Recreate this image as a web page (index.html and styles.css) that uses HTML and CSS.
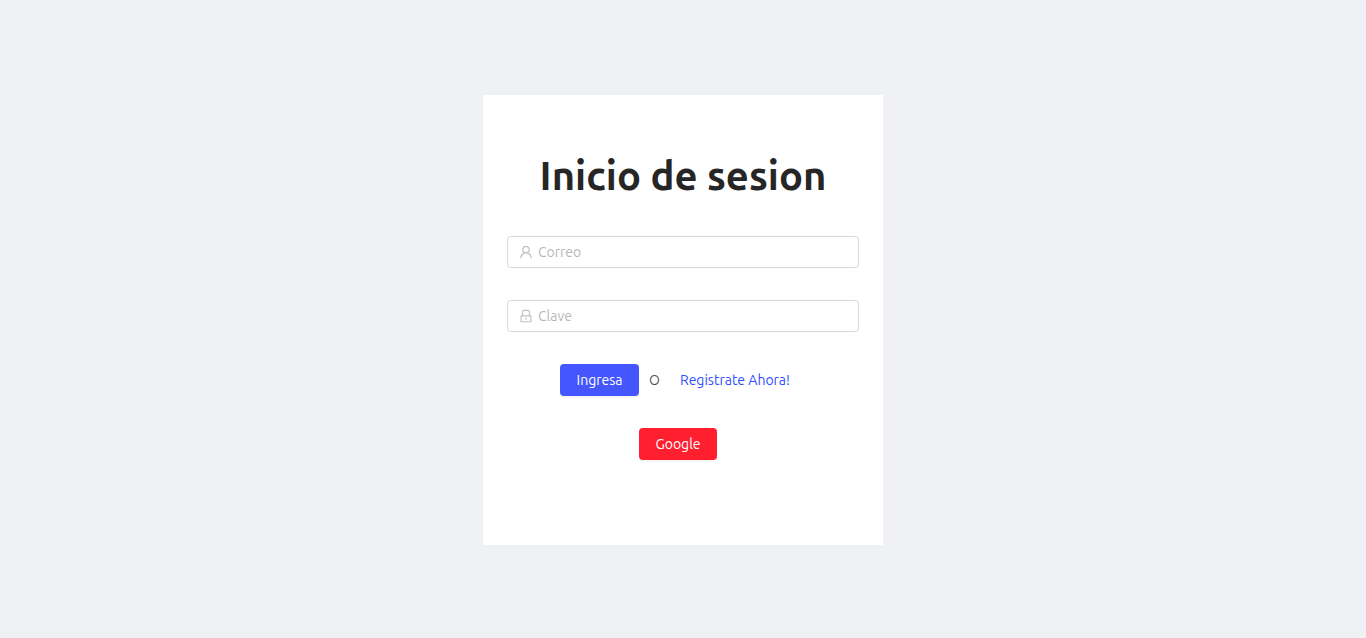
FILE: index.html
```html
<!DOCTYPE html>
<html lang="es">
<head>
<meta charset="utf-8">
<meta name="viewport" content="width=device-width, initial-scale=1">
<title>Inicio de sesion</title>
<link rel="stylesheet" href="styles.css">
</head>
<body>
<main class="card">
  <h1 class="title">Inicio de sesion</h1>
  <form class="form">
    <label class="field">
      <svg class="icon" viewBox="64 64 896 896" aria-hidden="true"><path d="M858.5 763.6a374 374 0 00-80.6-119.500 375.630 375.630 0 00-119.500-80.600c-.4-.2-.8-.3-1.200-.5C719.500 518 760 444.700 760 362c0-137-111-248-248-248S264 225 264 362c0 82.700 40.500 156 102.800 201.100-.4.2-.8.3-1.200.5-44.800 18.900-85 46-119.500 80.600a375.630 375.630 0 00-80.600 119.500A371.700 371.700 0 00136 901.800a8 8 0 008 8.200h60c4.400 0 7.900-3.500 8-7.800 2-77.200 33-149.500 87.800-204.300 56.700-56.700 132-87.900 212.200-87.900s155.500 31.200 212.200 87.900C779 752.700 810 825 812 902.200c.1 4.400 3.600 7.800 8 7.800h60a8 8 0 008-8.200c-1-47.800-10.900-94.300-29.500-138.200zM512 534c-45.900 0-89.100-17.900-121.600-50.400S340 407.900 340 362c0-45.900 17.900-89.100 50.400-121.600S466.100 190 512 190s89.100 17.900 121.600 50.400S684 316.100 684 362c0 45.900-17.900 89.100-50.400 121.600S557.900 534 512 534z"/></svg>
      <input class="input" type="email" placeholder="Correo" aria-label="Correo">
    </label>
    <label class="field">
      <svg class="icon" viewBox="64 64 896 896" aria-hidden="true"><path d="M832 464h-68V240c0-70.700-57.300-128-128-128H388c-70.700 0-128 57.300-128 128v224h-68c-17.700 0-32 14.300-32 32v384c0 17.700 14.300 32 32 32h640c17.700 0 32-14.300 32-32V496c0-17.700-14.300-32-32-32zM332 240c0-30.900 25.100-56 56-56h248c30.900 0 56 25.100 56 56v224H332V240zm460 600H232V536h560v304zM484 701v53c0 4.400 3.600 8 8 8h40c4.400 0 8-3.600 8-8v-53a48.010 48.010 0 10-56 0z"/></svg>
      <input class="input" type="password" placeholder="Clave" aria-label="Clave">
    </label>
    <div class="actions">
      <button class="button primary" type="submit">Ingresa</button>
      <span>O</span>
      <a class="link" href="#registro">Registrate Ahora!</a>
    </div>
    <div class="actions">
      <button class="button google" type="button">Google</button>
    </div>
  </form>
</main>
</body>
</html>
```
FILE: styles.css
```css
* {
  box-sizing: border-box;
}

body {
  margin: 0;
  padding: 95px 0 93px;
  min-height: 100vh;
  display: flex;
  align-items: center;
  justify-content: center;
  background: #eff1f5;
  color: rgba(0, 0, 0, 0.7);
  font-family: Ubuntu, "Noto Sans", sans-serif;
  font-size: 14px;
  line-height: 22px;
}

.card {
  width: 100%;
  max-width: 400px;
  min-height: 450px;
  padding: 56px 24px 24px;
  background: #fff;
}

.title {
  margin: 0 0 36px;
  color: #262626;
  font-size: 40px;
  font-weight: 600;
  line-height: 49px;
  text-align: center;
  white-space: nowrap;
}

.form {
  display: flex;
  flex-direction: column;
  gap: 32px;
}

.field {
  display: flex;
  align-items: center;
  gap: 5px;
  height: 32px;
  padding: 0 11px;
  border: 1px solid #d9d9d9;
  border-radius: 4px;
}

.field:focus-within {
  border-color: #4556ff;
}

.icon {
  flex: none;
  width: 14px;
  height: 14px;
  fill: #bfbfbf;
}

.input {
  flex: 1;
  min-width: 0;
  padding: 0;
  border: 0;
  outline: 0;
  background: transparent;
  color: rgba(0, 0, 0, 0.65);
  font: inherit;
}

.input::placeholder {
  color: #b8b8b8;
  opacity: 1;
}

.actions {
  display: flex;
  align-items: center;
  justify-content: center;
  gap: 10px;
}

.button {
  height: 32px;
  padding: 0 15px;
  border: 0;
  border-radius: 4px;
  box-shadow: 0 2px 0 rgba(0, 0, 0, 0.04);
  color: #fff;
  font: inherit;
  cursor: pointer;
}

.primary {
  min-width: 79px;
  background: #4556ff;
}

.google {
  min-width: 78px;
  margin-right: 10px;
  background: #ff1f2f;
}

.link {
  padding: 0 16px 0 10px;
  color: #3050ff;
  text-decoration: none;
}
```
